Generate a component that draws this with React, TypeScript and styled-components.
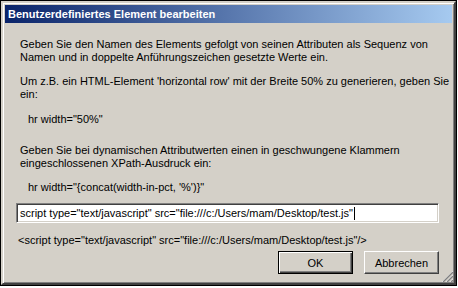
import React from "react";
import styled, { createGlobalStyle } from "styled-components";

const GlobalStyle = createGlobalStyle`
    html, body {
        margin: 0;
        padding: 0;
        background: #fff;
    }
    body {
        font-family: "Liberation Sans", Arial, sans-serif;
        font-size: 11px;
    }
`;

const Frame = styled.div`
    position: relative;
    width: 457px;
    height: 286px;
    box-sizing: border-box;
    border: 1px solid #000;
`;

const Window = styled.div`
    height: 100%;
    box-sizing: border-box;
    background: #d4d0c8;
    border-style: solid;
    border-width: 2px;
    border-color: #d4d0c8 #404040 #404040 #d4d0c8;
    box-shadow: inset 1px 1px #fff, inset -1px -1px #808080;
    padding: 2px;
    display: flex;
    flex-direction: column;
`;

const TitleBar = styled.div`
    height: 18px;
    flex-shrink: 0;
    display: flex;
    align-items: center;
    padding-left: 3px;
    background: linear-gradient(to right, #0a246a, #a6caf0);
    color: #fff;
    font-weight: bold;
    font-size: 11px;
    white-space: nowrap;
`;

const Body = styled.div`
    flex: 1;
    display: flex;
    flex-direction: column;
    padding: 15px 13px 0 11px;
    color: #000;
`;

const Text = styled.div<{ $top?: number; $indent?: number }>`
    margin-top: ${(p) => p.$top ?? 0}px;
    margin-left: ${(p) => p.$indent ?? 4}px;
    line-height: 13px;
    white-space: pre;
`;

const Field = styled.div`
    margin-top: 9px;
    height: 20px;
    box-sizing: border-box;
    background: #fff;
    border-style: solid;
    border-width: 1px;
    border-color: #808080 #fff #fff #808080;
    box-shadow: inset 1px 1px #404040, inset -1px -1px #d4d0c8;
    display: flex;
    align-items: center;
    padding-left: 3px;
    white-space: pre;
`;

const Caret = styled.span`
    display: inline-block;
    width: 1px;
    height: 13px;
    background: #000;
    margin-left: 1px;
`;

const ButtonRow = styled.div`
    margin-top: 4px;
    display: flex;
    justify-content: flex-end;
    gap: 11px;
`;

const Button = styled.button<{ $default?: boolean }>`
    width: 75px;
    height: 23px;
    box-sizing: border-box;
    padding: 0;
    font-family: "Liberation Sans", Arial, sans-serif;
    font-size: 11px;
    color: #000;
    background: #d4d0c8;
    border: 1px solid ${(p) => (p.$default ? "#000" : "transparent")};
    border-color: ${(p) => (p.$default ? "#000" : "#fff #404040 #404040 #fff")};
    box-shadow: ${(p) =>
        p.$default
            ? "inset 1px 1px #fff, inset -1px -1px #404040, inset -2px -2px #808080"
            : "inset -1px -1px #808080"};
`;

const Grip = styled.svg`
    position: absolute;
    right: 3px;
    bottom: 3px;
`;

const SizeGrip = () => (
    <Grip width="12" height="12" viewBox="0 0 12 12">
        {[0, 4, 8].map((o) => (
            <g key={o}>
                <line x1={o + 1} y1="12" x2="12" y2={o + 1} stroke="#fff" strokeWidth="1" />
                <line x1={o + 2} y1="12" x2="12" y2={o + 2} stroke="#808080" strokeWidth="1.4" />
            </g>
        ))}
    </Grip>
);

const App = () => {
    return (
        <>
            <GlobalStyle />
            <Frame>
                <Window>
                    <TitleBar>Benutzerdefiniertes Element bearbeiten</TitleBar>
                    <Body>
                        <Text>
                            Geben Sie den Namen des Elements gefolgt von seinen Attributen als Sequenz von{"\n"}
                            Namen und in doppelte Anführungszeichen gesetzte Werte ein.
                        </Text>
                        <Text $top={11}>
                            Um z.B. ein HTML-Element 'horizontal row' mit der Breite 50% zu generieren, geben Sie{"\n"}
                            ein:
                        </Text>
                        <Text $top={12} $indent={12}>hr width="50%"</Text>
                        <Text $top={18}>
                            Geben Sie bei dynamischen Attributwerten einen in geschwungene Klammern{"\n"}
                            eingeschlossenen XPath-Ausdruck ein:
                        </Text>
                        <Text $top={11} $indent={12}>hr width="{"{"}concat(width-in-pct, '%'){"}"}"</Text>
                        <Field>
                            script type="text/javascript" src="file:///c:/Users/mam/Desktop/test.js"
                            <Caret />
                        </Field>
                        <Text $top={11} $indent={2}>
                            &lt;script type="text/javascript" src="file:///c:/Users/mam/Desktop/test.js"/&gt;
                        </Text>
                        <ButtonRow>
                            <Button $default>OK</Button>
                            <Button>Abbrechen</Button>
                        </ButtonRow>
                    </Body>
                </Window>
                <SizeGrip />
            </Frame>
        </>
    );
};

export default App;
